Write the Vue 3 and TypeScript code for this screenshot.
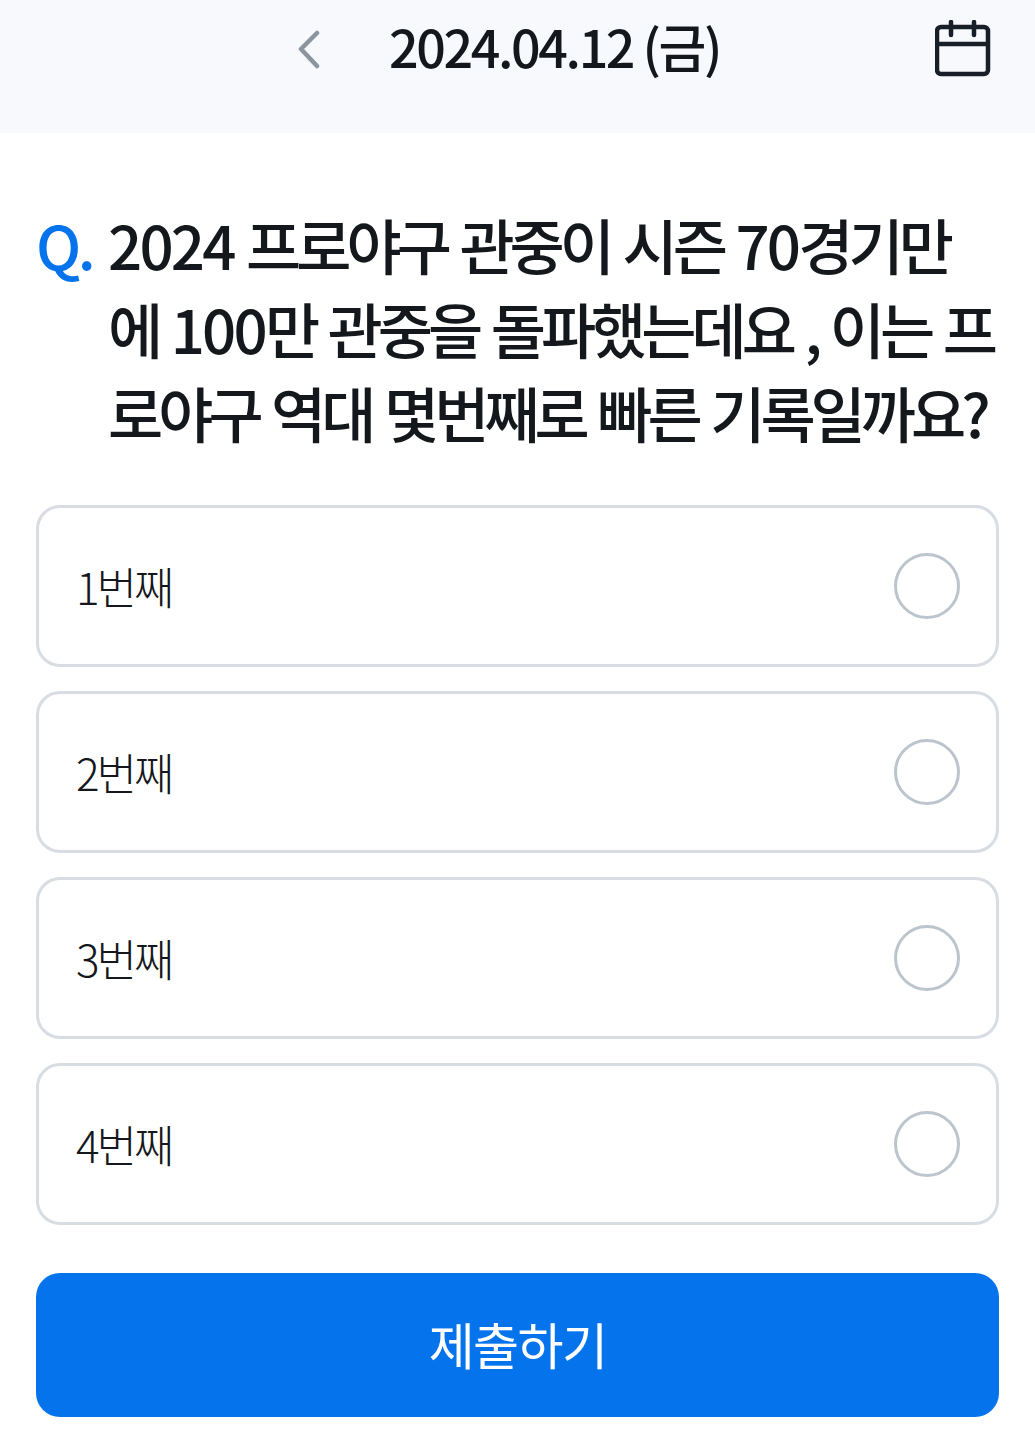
<script setup lang="ts">
const options: string[] = ['1번째', '2번째', '3번째', '4번째']
</script>

<template>
  <main class="page">
    <header class="top">
      <button class="back" aria-label="이전">
        <svg width="26" height="40" viewBox="0 0 26 40" fill="none">
          <path d="M21 4 L5 20 L21 37" stroke="#8b959e" stroke-width="4.5" stroke-linecap="round" stroke-linejoin="round" />
        </svg>
      </button>
      <h1 class="date">2024.04.12 (금)</h1>
      <button class="cal" aria-label="달력">
        <svg width="56" height="58" viewBox="0 0 56 58" fill="none" stroke="#191f28" stroke-width="4.5">
          <rect x="2" y="7" width="51" height="47" rx="4" />
          <path d="M2 24 H53" />
          <path d="M16 2 V15 M39 2 V15" stroke-linecap="round" />
        </svg>
      </button>
    </header>

    <section class="body">
      <div class="question">
        <span class="q">Q.</span>
        <p class="qtext"><span class="num">2024</span> 프로야구 관중이 시즌 <span class="num">70</span>경기만에 <span class="num">100</span>만 관중을 돌파했는데요 , 이는 프로야구 역대 몇번째로 빠른 기록일까요?</p>
      </div>
      <ul class="options">
        <li v-for="o in options" :key="o" class="option">
          <span class="label">{{ o }}</span>
          <span class="radio"></span>
        </li>
      </ul>
      <button class="submit">제출하기</button>
    </section>
  </main>
</template>

<style>
html, body { margin: 0; background: #fff; }
</style>

<style scoped>
.page {
  width: 1035px;
  height: 1437px;
  overflow: hidden;
  font-family: "Noto Sans CJK KR", "Noto Sans", sans-serif;
  color: #14181c;
}
.top {
  height: 133px;
  background: #f8f9fd;
  display: flex;
  align-items: flex-start;
  box-sizing: border-box;
  padding: 16px 44px 0 296px;
}
.back, .cal {
  border: 0;
  padding: 0;
  background: none;
  display: block;
}
.back { margin-top: 13px; width: 26px; height: 40px; }
.date {
  margin: 0 0 0 67px;
  font-size: 52px;
  line-height: 60px;
  font-weight: 500;
  letter-spacing: -2.4px;
  white-space: nowrap;
}
.cal { margin-left: auto; margin-top: 4px; }
.body { padding: 69px 36px 0; }
.question { display: flex; }
.q {
  width: 72px;
  flex: none;
  font-size: 60px;
  line-height: 84px;
  font-weight: 500;
  color: #0573ec;
  letter-spacing: -3.5px;
}
.qtext {
  margin: 0;
  font-size: 60px;
  line-height: 84px;
  font-weight: 500;
  letter-spacing: -5px;
  word-spacing: 4px;
  word-break: break-all;
}
.num { letter-spacing: -2.8px; }
.options {
  list-style: none;
  margin: 51px 0 0;
  padding: 0;
  display: flex;
  flex-direction: column;
  gap: 24px;
}
.option {
  height: 162px;
  box-sizing: border-box;
  border: 3px solid #d8dde4;
  border-radius: 24px;
  display: flex;
  align-items: center;
  justify-content: space-between;
  padding: 0 36px 0 37px;
}
.label {
  font-size: 44px;
  font-weight: 300;
  letter-spacing: -3px;
}
.radio {
  width: 66px;
  height: 66px;
  box-sizing: border-box;
  border: 3px solid #bcc5ce;
  border-radius: 50%;
}
.submit {
  display: block;
  width: 100%;
  height: 144px;
  margin-top: 48px;
  padding: 0 0 4px;
  border: 0;
  border-radius: 24px;
  background: #0573ec;
  color: #fff;
  font-family: inherit;
  font-size: 50px;
  font-weight: 400;
  letter-spacing: -1.6px;
}
</style>
